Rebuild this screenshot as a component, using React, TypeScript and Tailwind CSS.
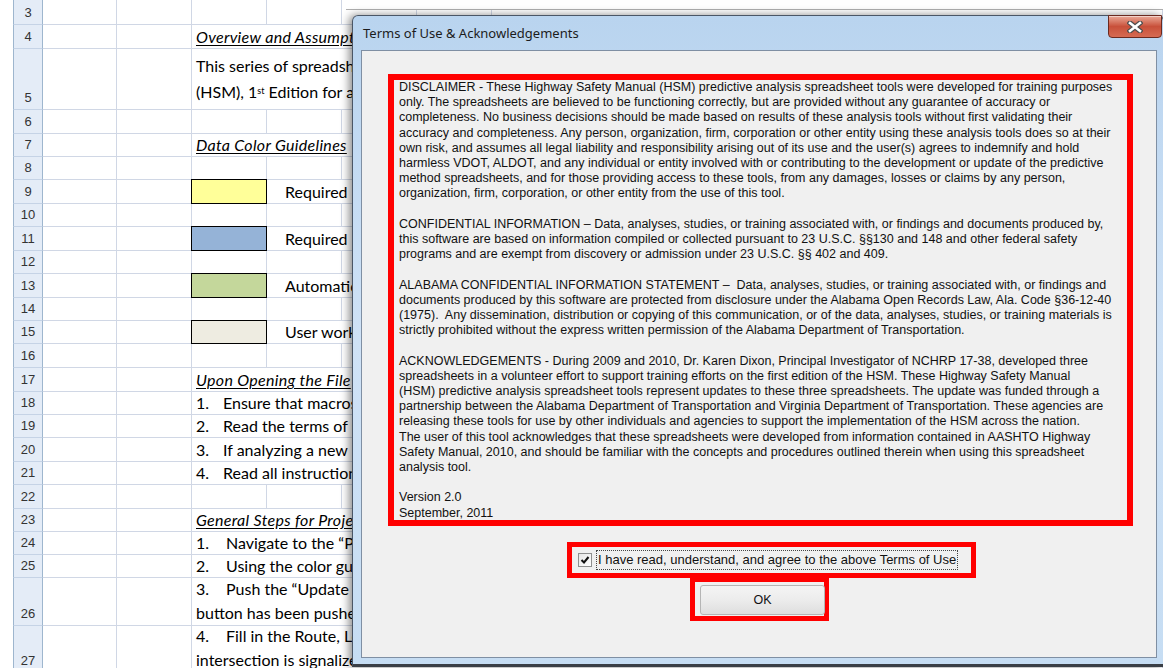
import type { ReactNode } from 'react';

type Row = {
  n: number;
  h: number;
  kind: 'blank' | 'text' | 'swatch';
  lines?: ReactNode[];
  lead?: string;
  swatch?: string;
  label?: string;
};

const heading = (t: string) => (
  <span className="italic underline underline-offset-2 tracking-[0.3px]">{t}</span>
);

const item = (num: string, text: string, w: string) => (
  <>
    <span className={`inline-block ${w}`}>{num}</span>
    {text}
  </>
);

const rows: Row[] = [
  { n: 3, h: 25, kind: 'blank' },
  { n: 4, h: 24, kind: 'text', lines: [heading('Overview and Assumptions')] },
  {
    n: 5,
    h: 61,
    kind: 'text',
    lead: 'leading-[26px] pb-[4px]',
    lines: [
      'This series of spreadsheets',
      <>
        (HSM), 1<sup className="text-[9px]">st</sup> Edition for analysis
      </>,
    ],
  },
  { n: 6, h: 24, kind: 'blank' },
  { n: 7, h: 23, kind: 'text', lines: [heading('Data Color Guidelines')] },
  { n: 8, h: 23, kind: 'blank' },
  { n: 9, h: 24, kind: 'swatch', swatch: 'bg-[#ffff99]', label: 'Required' },
  { n: 10, h: 23, kind: 'blank' },
  { n: 11, h: 24, kind: 'swatch', swatch: 'bg-[#95b3d7]', label: 'Required' },
  { n: 12, h: 23, kind: 'blank' },
  { n: 13, h: 24, kind: 'swatch', swatch: 'bg-[#c4d79b]', label: 'Automatic' },
  { n: 14, h: 23, kind: 'blank' },
  { n: 15, h: 23, kind: 'swatch', swatch: 'bg-[#eeece1]', label: 'User work' },
  { n: 16, h: 24, kind: 'blank' },
  { n: 17, h: 24, kind: 'text', lines: [heading('Upon Opening the File')] },
  { n: 18, h: 23, kind: 'text', lines: [item('1.', 'Ensure that macros', 'w-[27px]')] },
  { n: 19, h: 23, kind: 'text', lines: [item('2.', 'Read the terms of use', 'w-[27px]')] },
  { n: 20, h: 24, kind: 'text', lines: [item('3.', 'If analyzing a new', 'w-[27px]')] },
  { n: 21, h: 23, kind: 'text', lines: [item('4.', 'Read all instructions', 'w-[27px]')] },
  { n: 22, h: 24, kind: 'blank' },
  { n: 23, h: 23, kind: 'text', lines: [heading('General Steps for Project')] },
  { n: 24, h: 23, kind: 'text', lines: [item('1.', 'Navigate to the \u201cProject', 'w-[30px]')] },
  { n: 25, h: 23, kind: 'text', lines: [item('2.', 'Using the color guidelines', 'w-[30px]')] },
  {
    n: 26,
    h: 48,
    kind: 'text',
    lead: 'leading-[24px] pb-0',
    lines: [item('3.', 'Push the \u201cUpdate', 'w-[30px]'), 'button has been pushed'],
  },
  {
    n: 27,
    h: 47,
    kind: 'text',
    lead: 'leading-[24px] pb-0',
    lines: [item('4.', 'Fill in the Route, Location', 'w-[30px]'), 'intersection is signalized'],
  },
];

const grid = 'border-r border-b border-[#d0d7e5]';

function SheetRow({ row }: { row: Row }) {
  return (
    <div className="flex" style={{ height: row.h }}>
      <div className="w-[13px] shrink-0" />
      <div className="w-[30px] shrink-0 flex items-end justify-center pb-[3px] bg-[#e4ecf7] border-x border-b border-x-[#9eb6ce] border-b-[#c5d3e6] font-['Liberation_Sans',sans-serif] text-[13px] leading-[16px] text-[#333]">
        {row.n}
      </div>
      <div className={`w-[74px] shrink-0 ${grid}`} />
      <div className={`w-[75px] shrink-0 ${grid}`} />
      {row.kind === 'blank' && (
        <>
          <div className={`w-[75px] shrink-0 ${grid}`} />
          <div className={`w-[75px] shrink-0 ${grid}`} />
          <div className={`w-[75px] shrink-0 ${grid}`} />
          <div className={`w-[75px] shrink-0 ${grid}`} />
          <div className={`flex-1 ${grid}`} />
        </>
      )}
      {row.kind === 'text' && (
        <div
          className={`flex-1 flex flex-col justify-end pl-[4px] whitespace-nowrap overflow-hidden ${
            row.lead ?? 'leading-[18px] pb-[2px]'
          } ${grid}`}
        >
          {row.lines?.map((l, i) => (
            <div key={i}>{l}</div>
          ))}
        </div>
      )}
      {row.kind === 'swatch' && (
        <>
          <div className={`w-[75px] shrink-0 relative ${grid}`}>
            <div className={`absolute -top-px -left-px right-[-1px] bottom-[-1px] border border-black ${row.swatch}`} />
          </div>
          <div className={`flex-1 flex items-end pl-[18px] pb-[2px] leading-[18px] whitespace-nowrap ${grid}`}>
            {row.label}
          </div>
        </>
      )}
    </div>
  );
}

const terms: string[][] = [
  [
    'DISCLAIMER - These Highway Safety Manual (HSM) predictive analysis spreadsheet tools were developed for training purposes',
    'only. The spreadsheets are believed to be functioning correctly, but are provided without any guarantee of accuracy or',
    'completeness. No business decisions should be made based on results of these analysis tools without first validating their',
    'accuracy and completeness. Any person, organization, firm, corporation or other entity using these analysis tools does so at their',
    'own risk, and assumes all legal liability and responsibility arising out of its use and the user(s) agrees to indemnify and hold',
    'harmless VDOT, ALDOT, and any individual or entity involved with or contributing to the development or update of the predictive',
    'method spreadsheets, and for those providing access to these tools, from any damages, losses or claims by any person,',
    'organization, firm, corporation, or other entity from the use of this tool.',
  ],
  [
    'CONFIDENTIAL INFORMATION \u2013 Data, analyses, studies, or training associated with, or findings and documents produced by,',
    'this software are based on information compiled or collected pursuant to 23 U.S.C. \u00a7\u00a7130 and 148 and other federal safety',
    'programs and are exempt from discovery or admission under 23 U.S.C. \u00a7\u00a7 402 and 409.',
  ],
  [
    'ALABAMA CONFIDENTIAL INFORMATION STATEMENT \u2013  Data, analyses, studies, or training associated with, or findings and',
    'documents produced by this software are protected from disclosure under the Alabama Open Records Law, Ala. Code \u00a736-12-40',
    '(1975).  Any dissemination, distribution or copying of this communication, or of the data, analyses, studies, or training materials is',
    'strictly prohibited without the express written permission of the Alabama Department of Transportation.',
  ],
  [
    'ACKNOWLEDGEMENTS - During 2009 and 2010, Dr. Karen Dixon, Principal Investigator of NCHRP 17-38, developed three',
    'spreadsheets in a volunteer effort to support training efforts on the first edition of the HSM. These Highway Safety Manual',
    '(HSM) predictive analysis spreadsheet tools represent updates to these three spreadsheets. The update was funded through a',
    'partnership between the Alabama Department of Transportation and Virginia Department of Transportation. These agencies are',
    'releasing these tools for use by other individuals and agencies to support the implementation of the HSM across the nation.',
    'The user of this tool acknowledges that these spreadsheets were developed from information contained in AASHTO Highway',
    'Safety Manual, 2010, and should be familiar with the concepts and procedures outlined therein when using this spreadsheet',
    'analysis tool.',
  ],
  ['Version 2.0', 'September, 2011'],
];

function CloseButton() {
  return (
    <div className="absolute top-[-1px] right-[1px] w-[54px] h-[23px] rounded-b-[4px] border border-[#6b2a20] bg-gradient-to-b from-[#e9a897] via-[#c8503a] to-[#d66a52] shadow-[inset_0_1px_0_rgba(255,255,255,0.5)] flex items-center justify-center">
      <svg width="16" height="12" viewBox="0 0 16 12">
        <path d="M3 2 L13 10 M13 2 L3 10" stroke="#4d4d4d" strokeWidth="5" strokeLinecap="square" />
        <path d="M3 2 L13 10 M13 2 L3 10" stroke="#ffffff" strokeWidth="2.6" strokeLinecap="square" />
      </svg>
    </div>
  );
}

function TermsDialog() {
  return (
    <div className="absolute top-[15px] left-[352px] w-[812px] h-[652px] flex flex-col rounded-t-[6px] border border-[#4a5666] border-b-[3px] border-b-[#3a3f46] bg-gradient-to-b from-[#b9d4ef] via-[#cfe2f6] to-[#c6ddf3] shadow-[-3px_0_9px_rgba(0,0,0,0.45)]">
      <div className="relative h-[34px] shrink-0 pl-[10px] pt-[8px] font-['Noto_Sans',sans-serif] text-[13px] text-[#1c1c1c]">
        Terms of Use &amp; Acknowledgements
        <CloseButton />
      </div>
      <div className="flex-1 ml-[8px] mr-[6px] mb-[6px] border border-[#7f8fa3] bg-[#f0f0f0] flex flex-col font-['Liberation_Sans',sans-serif] text-[12.5px] text-[#111]">
        <div className="ml-[26px] mt-[23px] w-[745px] h-[452px] border-[6px] border-[#ff0000] pl-[5px] leading-[15.2px] whitespace-nowrap">
          {terms.map((p, i) => (
            <div key={i} className={i > 0 ? 'mt-[15.2px]' : ''}>
              {p.map((l, j) => (
                <div key={j} className="whitespace-pre">
                  {l}
                </div>
              ))}
            </div>
          ))}
        </div>
        <div className="ml-[205px] mt-[16px] w-[409px] h-[36px] border-[5px] border-[#ff0000] flex items-center pl-[6px]">
          <div className="w-[14px] h-[14px] border border-[#8e8f8f] bg-gradient-to-br from-[#e6e6e6] to-[#ffffff] flex items-center justify-center">
            <svg width="10" height="10" viewBox="0 0 10 10">
              <path d="M1.5 5 L4 7.5 L8.5 2" stroke="#111" strokeWidth="2" fill="none" />
            </svg>
          </div>
          <div className="ml-[4px] h-[20px] px-[1px] border border-dotted border-[#444] flex items-center whitespace-nowrap text-[13px]">
            I have read, understand, and agree to the above Terms of Use
          </div>
        </div>
        <div className="ml-[328px] mt-[-1px] w-[139px] h-[44px] border-[5px] border-[#ff0000] pl-[5px] pt-[3px]">
          <div className="w-[125px] h-[30px] rounded-[3px] border border-[#b5b5b5] bg-gradient-to-b from-[#f4f4f4] via-[#ececec] to-[#dedede] flex items-center justify-center text-[12.5px] text-[#111]">
            OK
          </div>
        </div>
      </div>
    </div>
  );
}

export default function App() {
  return (
    <div className="relative w-[1163px] h-[668px] overflow-hidden bg-white font-['Lato',sans-serif] text-[16px] text-black">
      {rows.map((r) => (
        <SheetRow key={r.n} row={r} />
      ))}
      <div className="absolute top-0 left-[346px] right-0 h-[10px] bg-white border-b border-[#b0b0b0]" />
      <TermsDialog />
    </div>
  );
}
